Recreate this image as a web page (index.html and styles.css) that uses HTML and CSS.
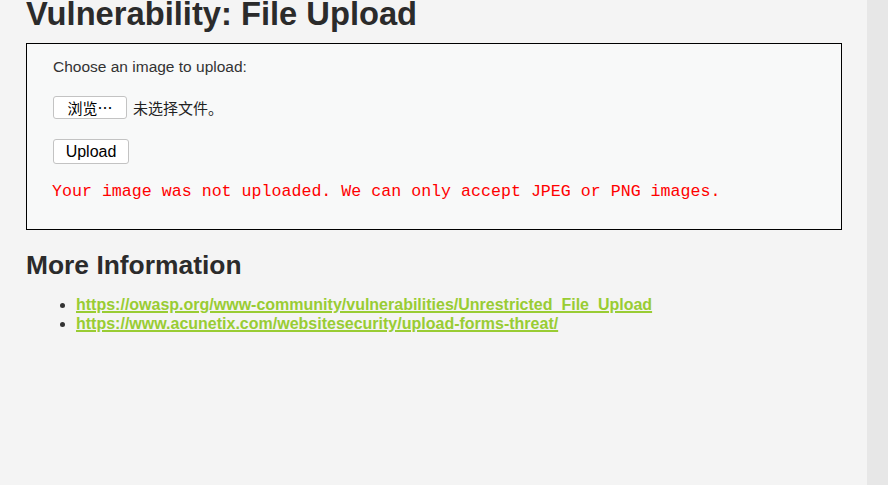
FILE: index.html
```html
<!DOCTYPE html>
<html>
<head>
<meta charset="utf-8">
<link rel="stylesheet" href="styles.css">
</head>
<body>
<div class="page">
  <div class="main">
    <h1 class="title">Vulnerability: File Upload</h1>
    <div class="vulnerable-code">
      <form class="upload-form">
        <div class="label">Choose an image to upload:</div>
        <div class="file-row">
          <span class="btn btn-browse">浏览…</span>
          <span class="no-file">未选择文件。</span>
        </div>
        <div class="submit-row">
          <span class="btn btn-upload">Upload</span>
        </div>
      </form>
      <pre class="error">Your image was not uploaded. We can only accept JPEG or PNG images.</pre>
    </div>
    <h2 class="subtitle">More Information</h2>
    <ul class="links">
      <li><a href="#">https://owasp.org/www-community/vulnerabilities/Unrestricted_File_Upload</a></li>
      <li><a href="#">https://www.acunetix.com/websitesecurity/upload-forms-threat/</a></li>
    </ul>
  </div>
  <div class="side"></div>
</div>
</body>
</html>
```
FILE: styles.css
```css
html, body {
  margin: 0;
  padding: 0;
  height: 100%;
  overflow: hidden;
}
body {
  background: #f4f4f4;
  font-family: "Liberation Sans", Arial, sans-serif;
  color: #333;
}
.page {
  display: flex;
  height: 485px;
}
.main {
  flex: 1;
  padding-left: 26px;
  padding-right: 25px;
}
.side {
  width: 21px;
  background: #e7e7e7;
}
.title {
  margin: -5px 0 0 0;
  font-size: 32.7px;
  font-weight: bold;
  color: #2b2b2b;
  line-height: 38px;
  white-space: nowrap;
}
.vulnerable-code {
  margin-top: 10px;
  border: 1px solid #000;
  background: #f8f9f9;
  padding: 13px 26px 0 26px;
  height: 172px;
}
.label {
  font-size: 15.5px;
  line-height: 20px;
}
.file-row {
  margin-top: 19px;
  display: flex;
  align-items: center;
  font-family: "Liberation Sans", "Noto Sans CJK SC", sans-serif;
  font-size: 16px;
}
.btn {
  display: inline-flex;
  align-items: center;
  justify-content: center;
  background: #fff;
  border: 1px solid #c3c3c3;
  border-radius: 3px;
  color: #000;
  box-sizing: border-box;
  font-size: 16px;
}
.btn-browse {
  width: 74px;
  height: 23px;
  font-family: "Noto Sans CJK SC", sans-serif;
  font-size: 15px;
}
.no-file {
  margin-left: 6px;
  font-family: "Noto Sans CJK SC", sans-serif;
  font-size: 15px;
  color: #222;
}
.submit-row {
  margin-top: 20px;
  display: flex;
}
.btn-upload {
  width: 76px;
  height: 25px;
}
.error {
  margin: 18px 0 0 -1px;
  font-family: "Liberation Mono", "Courier New", monospace;
  font-size: 16.64px;
  color: #ff0000;
  line-height: 20px;
}
.subtitle {
  margin: 20px 0 0 0;
  font-size: 26.4px;
  font-weight: bold;
  color: #2b2b2b;
  line-height: 30px;
}
.links {
  margin: 15px 0 0 0;
  padding-left: 50px;
  font-size: 16px;
  line-height: 19px;
}
.links a {
  color: #99cc33;
  font-weight: bold;
  text-decoration: underline;
  text-decoration-thickness: 2px;
}
```
